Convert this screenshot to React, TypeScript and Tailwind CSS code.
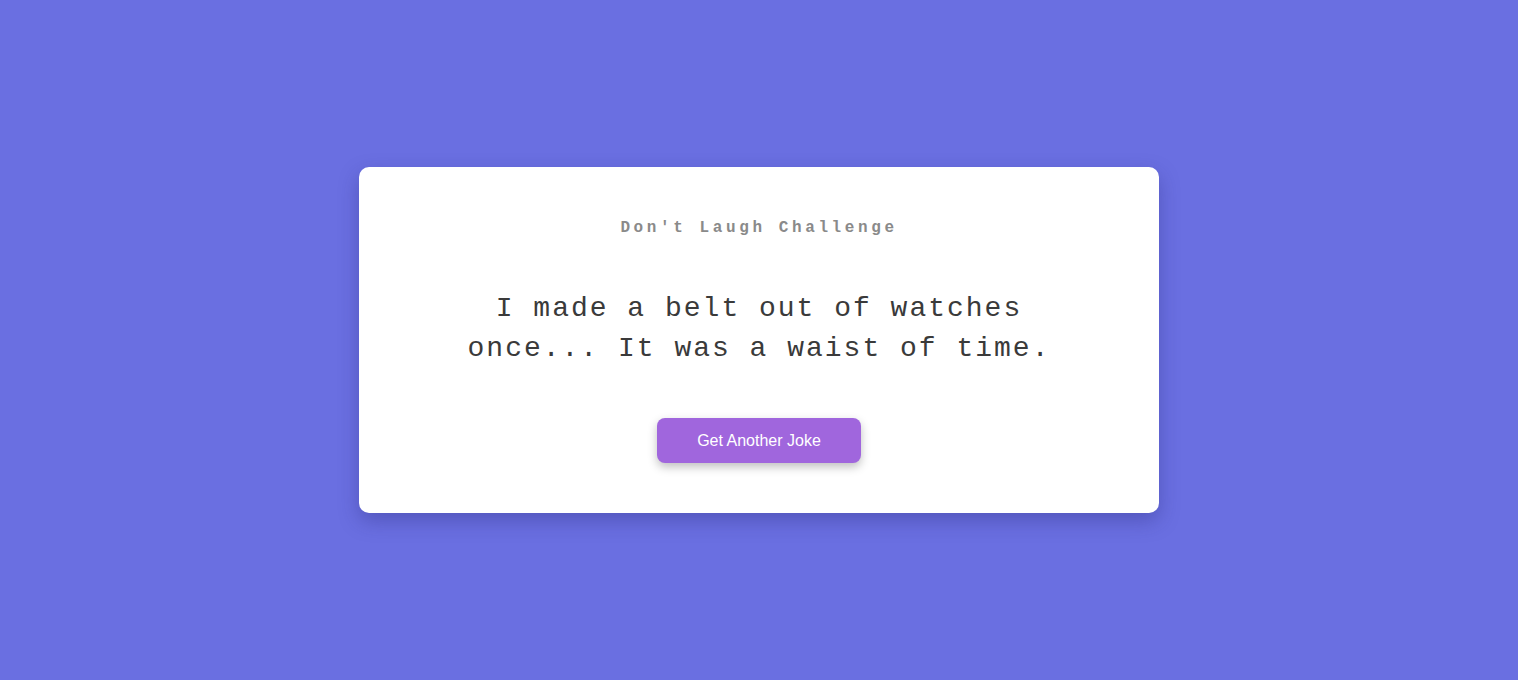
export default function App() {
  return (
    <div className="flex min-h-[680px] w-full items-center justify-center bg-[#6a6fe1]">
      <div className="flex w-[800px] flex-col items-center rounded-[10px] bg-white pb-[50px] pt-[52px] shadow-[0_8px_20px_rgba(40,40,120,0.35)]">
        <h1 className="font-['Liberation_Mono',monospace] text-[16px] font-bold leading-[19px] tracking-[3.6px] text-[#8a8a8a]">
          Don&apos;t Laugh Challenge
        </h1>
        <p className="mt-[51px] max-w-[620px] text-center font-['Liberation_Mono',monospace] text-[28px] leading-[40px] tracking-[2px] text-[#3a3a3a]">
          I made a belt out of watches once... It was a waist of time.
        </p>
        <button className="mt-[49px] rounded-[8px] bg-[#a066dd] px-10 py-[13px] font-['Liberation_Sans',Arial,sans-serif] text-[16px] leading-[19px] text-white shadow-[0_4px_10px_rgba(0,0,0,0.25)]">
          Get Another Joke
        </button>
      </div>
    </div>
  )
}
